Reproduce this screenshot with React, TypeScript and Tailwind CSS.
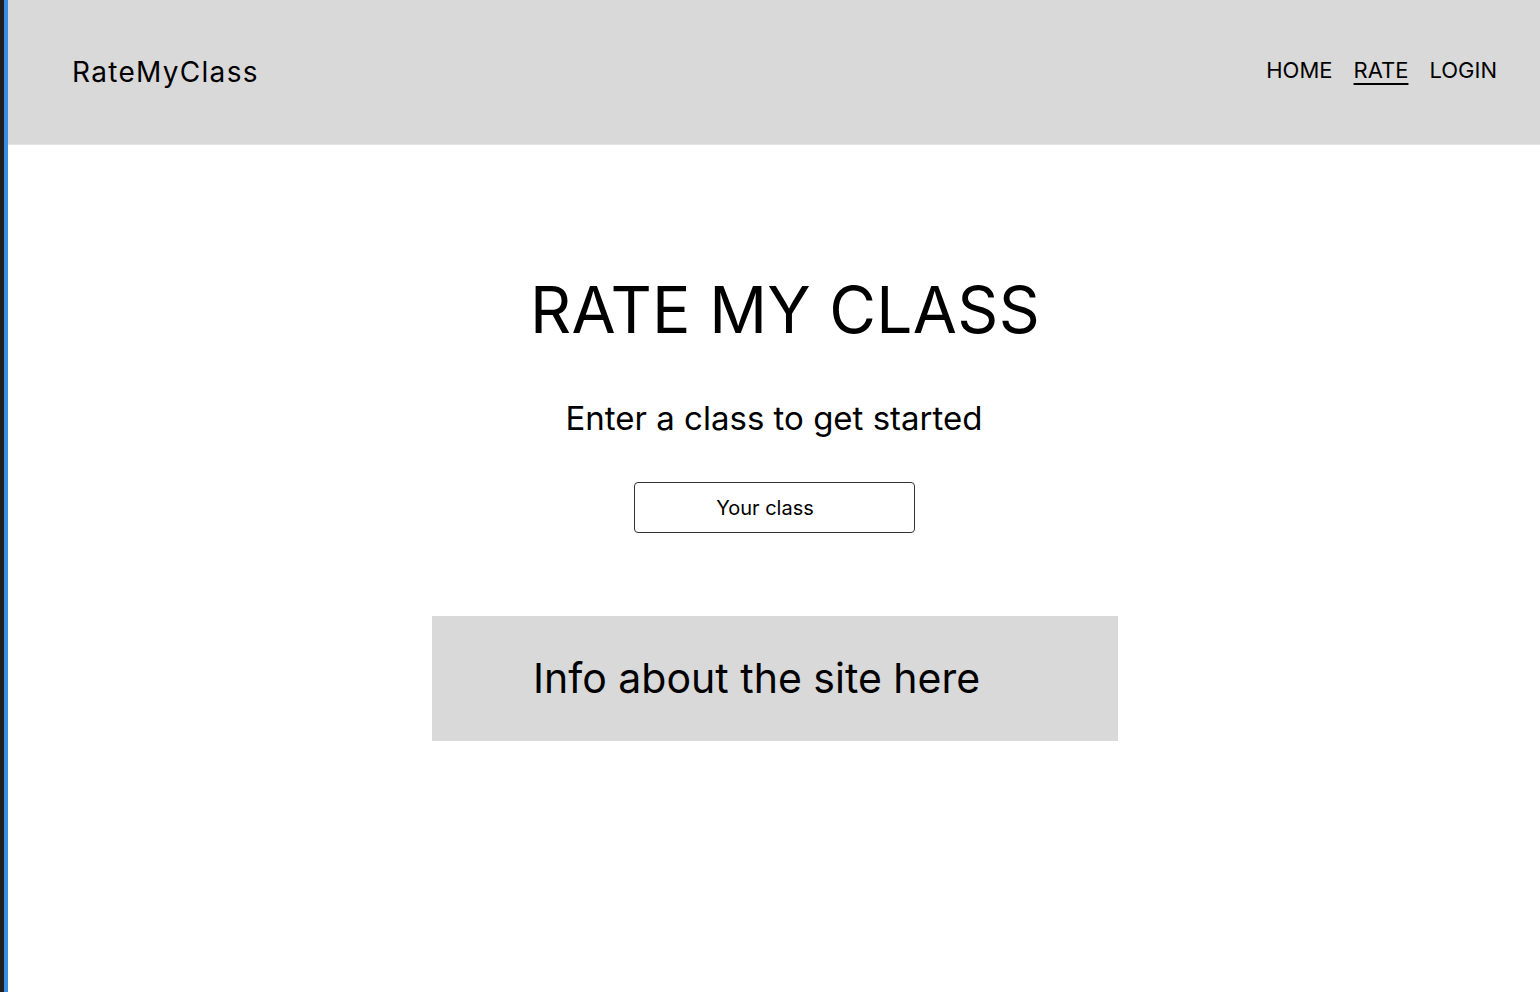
export default function App() {
  return (
    <div className="flex min-h-[992px] w-full bg-white" style={{ fontFamily: "Inter, 'Noto Sans', sans-serif" }}>
      <div className="w-[4px] shrink-0 bg-[#1e1e1e]" />
      <div className="w-[4px] shrink-0 bg-[#3d8ae3]" />
      <div className="flex flex-1 flex-col">
        <header className="flex h-[145px] items-center justify-between border-b border-[#e6e6e6] bg-[#d9d9d9] pl-[64px] pr-[43px]">
          <div className="text-[28px] tracking-[1.3px] text-black">RateMyClass</div>
          <nav className="flex gap-[21px] text-[22px] text-black -mt-[4px]">
            <a>HOME</a>
            <a className="underline underline-offset-[5px] decoration-[1.5px]">RATE</a>
            <a>LOGIN</a>
          </nav>
        </header>
        <main className="flex flex-col items-center">
          <h1 className="mt-[133px] text-[64px] leading-none tracking-[0.3px] text-black ml-[22px]">RATE MY CLASS</h1>
          <p className="mt-[60px] text-[33px] leading-none text-black">Enter a class to get started</p>
          <div className="mt-[47px] flex h-[51px] w-[281px] items-center justify-center rounded-[4px] border border-[#333] text-[20px] text-black pr-[18px]">
            Your class
          </div>
          <div className="mt-[83px] ml-[2px] flex h-[125px] w-[686px] items-center bg-[#d9d9d9] pl-[101px] text-[41px] text-black">
            Info about the site here
          </div>
        </main>
      </div>
    </div>
  );
}
